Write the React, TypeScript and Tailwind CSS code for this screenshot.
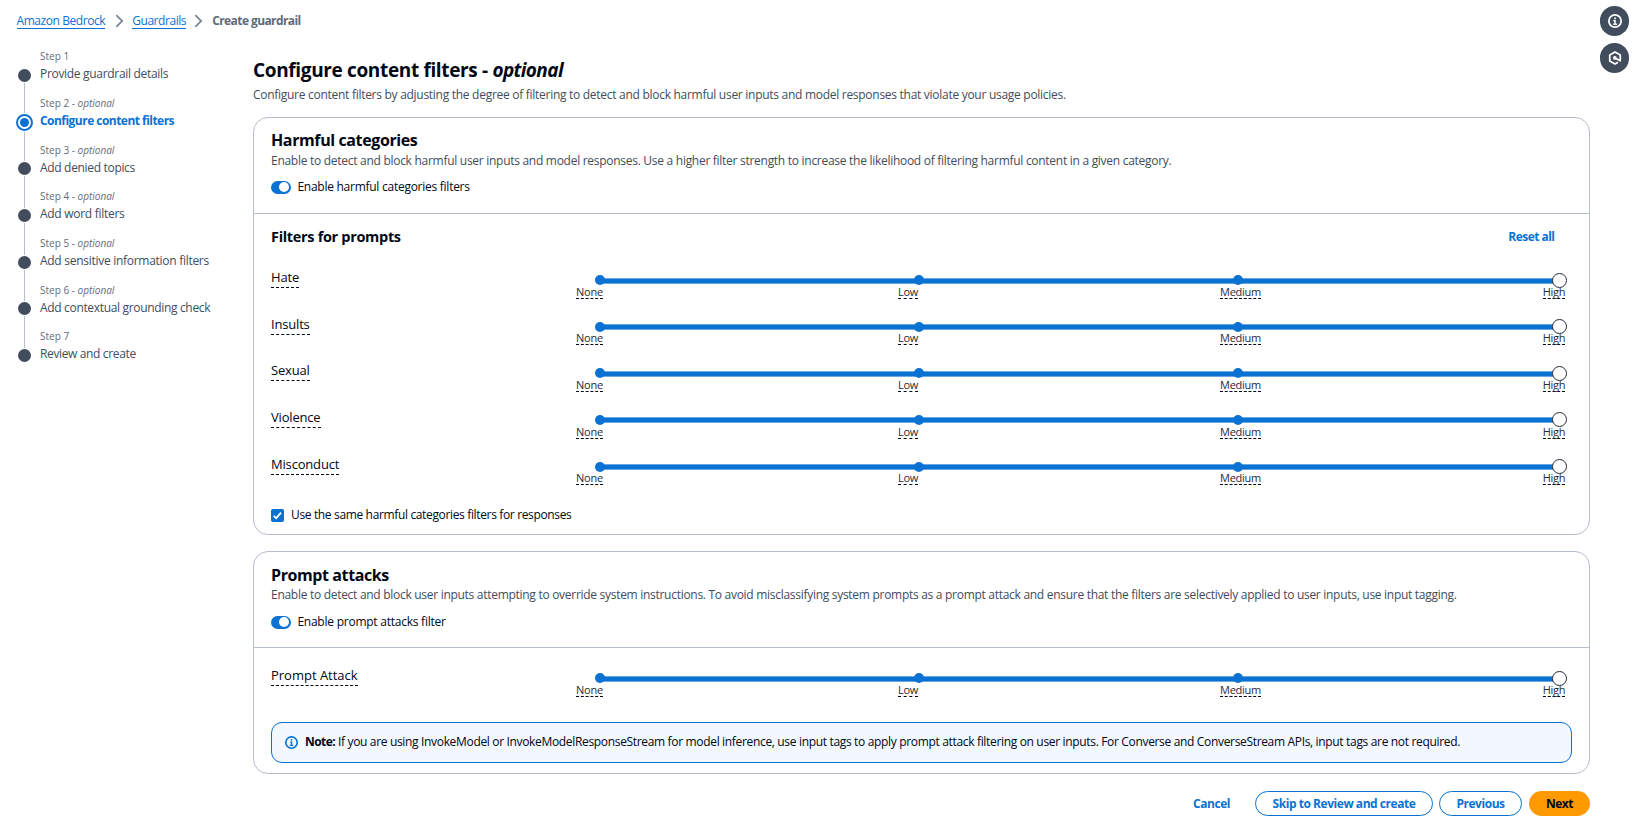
import type { ReactNode } from "react";

type Step = { label: string; optional: boolean; title: string; tracking: string };

const steps: Step[] = [
  { label: "Step 1", optional: false, title: "Provide guardrail details", tracking: "tracking-[-0.31px]" },
  { label: "Step 2", optional: true, title: "Configure content filters", tracking: "tracking-[-0.53px]" },
  { label: "Step 3", optional: true, title: "Add denied topics", tracking: "tracking-[-0.32px]" },
  { label: "Step 4", optional: true, title: "Add word filters", tracking: "tracking-[-0.28px]" },
  { label: "Step 5", optional: true, title: "Add sensitive information filters", tracking: "tracking-[-0.28px]" },
  { label: "Step 6", optional: true, title: "Add contextual grounding check", tracking: "tracking-[-0.33px]" },
  { label: "Step 7", optional: false, title: "Review and create", tracking: "tracking-[-0.36px]" },
];

const levels = ["None", "Low", "Medium", "High"];
const categories = ["Hate", "Insults", "Sexual", "Violence", "Misconduct"];

function Chevron() {
  return (
    <svg width="9" height="14" viewBox="0 0 9 14" fill="none" stroke="#7d8998" strokeWidth="1.8">
      <path d="M1.3 1.2 7.2 7 1.3 12.8" />
    </svg>
  );
}

function Breadcrumbs() {
  return (
    <nav className="flex h-[42px] items-center pl-[16.5px] text-[12px]">
      <a className="border-b border-[#0972d3] leading-[15px] tracking-[-0.43px] text-[#0972d3]">Amazon Bedrock</a>
      <span className="ml-[9.5px] mr-[8.5px]">
        <Chevron />
      </span>
      <a className="border-b border-[#0972d3] leading-[15px] tracking-[-0.44px] text-[#0972d3]">Guardrails</a>
      <span className="ml-[8px] mr-[9px]">
        <Chevron />
      </span>
      <span className="font-bold leading-[16px] tracking-[-0.58px] text-[#5f6b7a]">Create guardrail</span>
    </nav>
  );
}

function StepMarker({ active, first, last }: { active: boolean; first: boolean; last: boolean }) {
  const line = "w-px bg-[#b6bec9]";
  return (
    <div className="flex w-[17px] flex-col items-center">
      <div className={`${active ? "h-[17.5px]" : "h-[19.5px]"} ${first ? "w-px" : line}`} />
      {active ? (
        <div className="my-[1px] flex size-[17px] shrink-0 items-center justify-center rounded-full border-2 border-[#0972d3]">
          <div className="size-[9px] rounded-full bg-[#0972d3]" />
        </div>
      ) : (
        <div className="my-[1px] size-[13px] shrink-0 rounded-full bg-[#414d5c]" />
      )}
      <div className={`flex-1 ${last ? "w-px" : line}`} />
    </div>
  );
}

function Steps() {
  return (
    <aside className="w-[253px] shrink-0 pl-4 pt-[6.4px]">
      {steps.map((s, i) => (
        <div key={s.title} className="flex h-[46.67px] gap-[7px]">
          <StepMarker active={i === 1} first={i === 0} last={i === steps.length - 1} />
          <div className="whitespace-nowrap">
            <div className="h-[17px] text-[10px] leading-[17px] text-[#5f6b7a]">
              {s.label}
              {s.optional && (
                <>
                  {" - "}
                  <i>optional</i>
                </>
              )}
            </div>
            <div
              className={`text-[12px] leading-[18px] ${s.tracking} ${
                i === 1 ? "font-bold text-[#0972d3]" : "text-[#414d5c]"
              }`}
            >
              {s.title}
            </div>
          </div>
        </div>
      ))}
    </aside>
  );
}

function Toggle({ children, tracking }: { children: ReactNode; tracking: string }) {
  return (
    <label className="flex h-[14px] items-center gap-[6.4px]">
      <span className="flex h-[13px] w-5 items-center justify-end rounded-full bg-[#0972d3] pr-[2px]">
        <span className="size-[10px] rounded-full bg-white" />
      </span>
      <span className={`text-[12px] leading-[14px] text-[#000716] ${tracking}`}>{children}</span>
    </label>
  );
}

function SliderRow({ name, tracking = "tracking-[-0.18px]" }: { name: string; tracking?: string }) {
  return (
    <div className="flex h-[46.67px] items-start">
      <div className="w-[305px] shrink-0 pt-[0.4px]">
        <div
          className={`h-[20px] w-fit border-b border-dashed border-[#000716] text-[13px] leading-[18px] text-[#000716] ${tracking}`}
        >
          {name}
        </div>
      </div>
      <div className="pt-[5px]">
        <div className="relative ml-[19px] flex h-[15px] w-[970px] items-center justify-between">
          <div className="absolute left-[5px] right-[5px] top-[5px] h-[6px] border-y border-[#6ba6e2] bg-[#0972d3]" />
          <span className="relative size-[10px] rounded-full bg-[#0972d3]" />
          <span className="relative size-[10px] rounded-full bg-[#0972d3]" />
          <span className="relative size-[10px] rounded-full bg-[#0972d3]" />
          <span className="relative z-10 -mr-[2.5px] size-[15px] rounded-full border-[1.5px] border-[#232b37] bg-white" />
        </div>
        <div className="-mt-[2.8px] grid grid-cols-[322px_322px_322.7px_40px]">
          {levels.map((l) => (
            <div
              key={l}
              className="h-[14px] w-fit border-b border-dashed border-[#000716] text-[11px] leading-[13px] tracking-[-0.25px] text-[#232b37]"
            >
              {l}
            </div>
          ))}
        </div>
      </div>
    </div>
  );
}

function InfoGlyph({ size, color }: { size: number; color: string }) {
  return (
    <svg width={size} height={size} viewBox="0 0 16 16" fill="none" stroke={color} strokeWidth="2">
      <circle cx="8" cy="8" r="7" />
      <path d="M8 11.5V7.6H6.2M5.9 11.6h4.3" strokeWidth="1.7" />
      <path d="M7.1 4.9h1.9" strokeWidth="2" />
    </svg>
  );
}

function HexGlyph() {
  return (
    <svg width="14" height="14" viewBox="0 0 16 16" fill="none" stroke="#fff" strokeWidth="2">
      <path d="M8 8l6 3.2V4.6L8 1.2 2 4.6v6.8l6 3.4 3.4-1.9" strokeLinejoin="round" />
      <circle cx="7.8" cy="7.9" r="2.1" fill="#fff" stroke="none" />
    </svg>
  );
}

export default function App() {
  return (
    <div className="relative h-[822px] w-[1632px] overflow-hidden bg-white font-['Open_Sans','Noto_Sans',sans-serif]">
      <Breadcrumbs />
      <div className="flex">
        <Steps />
        <main className="w-[1337px] shrink-0 pt-[15px]">
          <h1 className="h-[26px] whitespace-pre text-[19px] font-bold leading-[26px] tracking-[-0.35px] text-[#000716]">
            Configure content filters - <i className="tracking-[-0.6px]">optional</i>
          </h1>
          <p className="mt-[3px] h-[18px] text-[12px] leading-[18px] tracking-[-0.28px] text-[#414d5c]">
            Configure content filters by adjusting the degree of filtering to detect and block harmful user inputs and
            model responses that violate your usage policies.
          </p>

          <section className="mt-[13px] h-[418px] rounded-[15px] border border-[#b6bec9]">
            <header className="h-[96px] border-b border-[#b6bec9] px-[17px] pt-[12px]">
              <h2 className="h-[20px] text-[16px] font-bold leading-[20px] tracking-[-0.39px] text-[#000716]">
                Harmful categories
              </h2>
              <p className="mb-[10px] mt-[2px] h-[18px] text-[12px] leading-[18px] tracking-[-0.28px] text-[#414d5c]">
                Enable to detect and block harmful user inputs and model responses. Use a higher filter strength to
                increase the likelihood of filtering harmful content in a given category.
              </p>
              <Toggle tracking="tracking-[-0.26px]">Enable harmful categories filters</Toggle>
            </header>
            <div className="px-[17px] pt-[12px]">
              <div className="mb-[17px] flex h-[22px] items-center justify-between pr-[17.5px]">
                <h3 className="text-[14.5px] font-bold tracking-[-0.32px] text-[#000716]">Filters for prompts</h3>
                <button className="text-[12px] font-bold tracking-[-0.53px] text-[#0972d3]">Reset all</button>
              </div>
              <div className="pt-[2.5px]">
                {categories.map((c) => (
                  <SliderRow key={c} name={c} />
                ))}
              </div>
              <label className="mt-[7.4px] flex h-[14px] items-center gap-[7px]">
                <span className="flex size-[13px] items-center justify-center rounded-[2px] bg-[#0972d3]">
                  <svg width="9" height="9" viewBox="0 0 9 9" fill="none" stroke="#fff" strokeWidth="1.8">
                    <path d="M.8 4.8 3.2 7.2 8 1.6" />
                  </svg>
                </span>
                <span className="text-[12px] leading-[14px] tracking-[-0.35px] text-[#000716]">
                  Use the same harmful categories filters for responses
                </span>
              </label>
            </div>
          </section>

          <section className="mt-[16px] h-[223px] rounded-[15px] border border-[#b6bec9]">
            <header className="h-[96px] border-b border-[#b6bec9] px-[17px] pt-[13px]">
              <h2 className="h-[20px] text-[16px] font-bold leading-[20px] tracking-[-0.4px] text-[#000716]">
                Prompt attacks
              </h2>
              <p className="mb-[11px] mt-[1px] h-[18px] text-[12px] leading-[18px] tracking-[-0.287px] text-[#414d5c]">
                Enable to detect and block user inputs attempting to override system instructions. To avoid
                misclassifying system prompts as a prompt attack and ensure that the filters are selectively applied to
                user inputs, use input tagging.
              </p>
              <Toggle tracking="tracking-[-0.24px]">Enable prompt attacks filter</Toggle>
            </header>
            <div className="px-[17px] pt-[17.7px]">
              <SliderRow name="Prompt Attack" tracking="tracking-[-0.01px]" />
              <div className="mt-[9.6px] flex h-[41px] items-center rounded-[11px] border border-[#0972d3] bg-[#f2f8fd] pl-[13px]">
                <InfoGlyph size={13} color="#0972d3" />
                <p className="ml-[7px] whitespace-nowrap text-[12px] tracking-[-0.332px] text-[#000716]">
                  <b className="tracking-[-0.55px]">Note:</b> If you are using InvokeModel or InvokeModelResponseStream
                  for model inference, use input tags to apply prompt attack filtering on user inputs. For Converse and
                  ConverseStream APIs, input tags are not required.
                </p>
              </div>
            </div>
          </section>

          <footer className="mt-[17px] flex h-[25px] justify-end text-[12px] font-bold tracking-[-0.46px] text-[#0972d3]">
            <button className="mr-[25px]">Cancel</button>
            <button className="mr-[6px] w-[178px] rounded-full border border-[#0972d3]">
              Skip to Review and create
            </button>
            <button className="mr-[7px] w-[83px] rounded-full border border-[#0972d3]">Previous</button>
            <button className="w-[61px] rounded-full bg-[#ff9900] text-[#000716]">Next</button>
          </footer>
        </main>
      </div>

      <div className="absolute right-[3px] top-[6px] flex flex-col gap-[7px]">
        <button className="flex h-[30px] w-[29px] items-center justify-center rounded-full bg-[#414d5c]">
          <InfoGlyph size={14} color="#fff" />
        </button>
        <button className="flex h-[30px] w-[29px] items-center justify-center rounded-full bg-[#414d5c]">
          <HexGlyph />
        </button>
      </div>
    </div>
  );
}
